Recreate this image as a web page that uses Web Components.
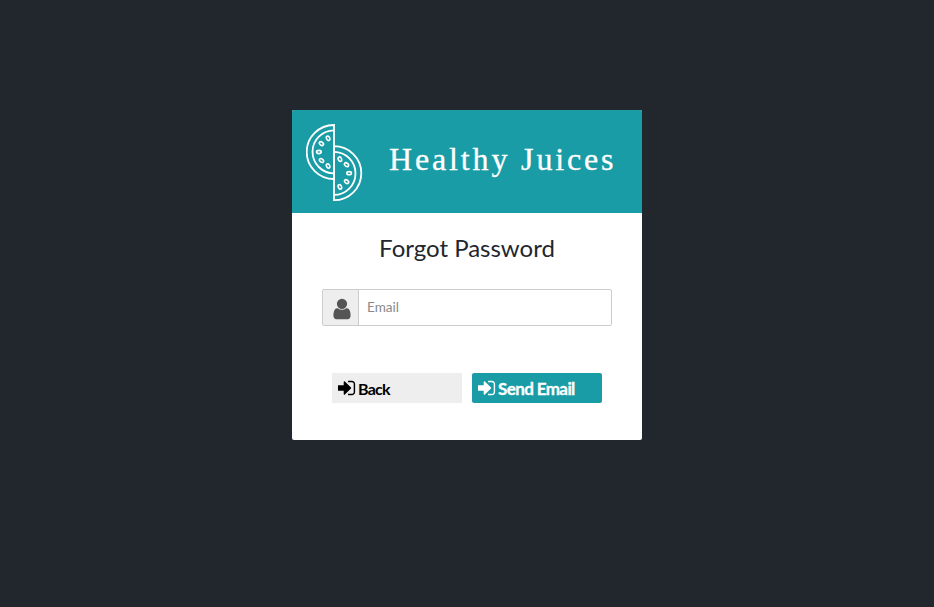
<!DOCTYPE html>
<html lang="en">
<head>
<meta charset="utf-8">
<title>Healthy Juices</title>
<style>
html,body{margin:0;height:100%;background:#22272e}
body{font-family:Lato,"Liberation Sans",sans-serif;color:#22272e}
</style>
</head>
<body>
<forgot-page></forgot-page>
<script>
const define=(name,html)=>customElements.define(name,class extends HTMLElement{
  constructor(){super();this.attachShadow({mode:'open'}).innerHTML=html;}
});

define('melon-logo',`<style>:host{display:block;width:58px;height:78px}svg{display:block}</style>
<svg width="58" height="78" viewBox="0.5 0 58 78" fill="none" stroke="#fff" stroke-width="1.8">
<defs><g id="half"><path d="M28.5 1A27.3 27 0 0 0 28.5 55Z"/><path d="M28.5 6.3A21.3 21.3 0 0 0 28.5 49.3"/>
<g stroke-width="1.6"><ellipse cx="22.6" cy="14.3" rx="1.6" ry="2.3" transform="rotate(-25 22.6 14.3)"/>
<ellipse cx="15.9" cy="19.6" rx="1.6" ry="2.3" transform="rotate(-50 15.9 19.6)"/>
<ellipse cx="13.4" cy="28" rx="1.6" ry="2.3" transform="rotate(90 13.4 28)"/>
<ellipse cx="16" cy="36.5" rx="1.6" ry="2.3" transform="rotate(-50 16 36.5)"/>
<ellipse cx="22.6" cy="42" rx="1.6" ry="2.3" transform="rotate(-25 22.6 42)"/></g></g></defs>
<use href="#half"/><use href="#half" transform="rotate(180 28.5 38.6)"/></svg>`);

define('brand-header',`<style>
:host{display:flex;box-sizing:border-box;height:103px;padding:14px 14px 11px;gap:25px;background:#199ca6;border-radius:2px 2px 0 0;color:#fff}
span{font:32px/37px "Liberation Serif",serif;letter-spacing:2.85px;white-space:nowrap;margin-top:17px;-webkit-text-stroke:.3px #fff}
</style><melon-logo></melon-logo><span><slot></slot></span>`);

define('icon-field',`<style>
:host{display:flex;box-sizing:border-box;height:37px;border:1px solid #ccc;border-radius:2px;background:#fff;overflow:hidden}
div{width:36px;box-sizing:border-box;border-right:1px solid #ccc;background:#eee;display:flex;padding:7px 0 0 6.5px}
svg{flex:none}
span{font-size:13.6px;line-height:35px;color:#8a8a8a;padding-left:8px}
</style><div><svg width="24" height="24" viewBox="0 0 1792 1792" fill="#555"><path d="M1536 1399q0 109-62.5 187t-150.5 78h-854q-88 0-150.5-78t-62.5-187q0-85 8.5-160.5t31.5-152 58.5-131 94-89 134.5-34.5q131 128 313 128t313-128q76 0 134.5 34.5t94 89 58.5 131 31.5 152 8.5 160.5zm-256-887q0 159-112.5 271.5t-271.5 112.5-271.5-112.5-112.5-271.5 112.5-271.5 271.5-112.5 271.5 112.5 112.5 271.5z"/></svg></div><span><slot></slot></span>`);

define('action-button',`<style>
:host{display:flex;box-sizing:border-box;width:130px;height:30px;background:#eee;color:#000;padding-left:5px;gap:1px}
:host([primary]){background:#199ca6;color:#fff;border-radius:2px}
svg{flex:none;margin-top:5px}
span{font-size:16px;font-weight:700;line-height:31px;letter-spacing:-.75px;white-space:nowrap}
:host([primary]) span{font-size:17px;line-height:32px;letter-spacing:-.6px;-webkit-text-stroke:.3px #fff}
</style><svg width="20" height="20" viewBox="40 0 1792 1792" fill="currentColor"><path d="M1312 896q0 26-19 45l-544 544q-19 19-45 19t-45-19-19-45v-288h-448q-26 0-45-19t-19-45v-384q0-26 19-45t45-19h448v-288q0-26 19-45t45-19 45 19l544 544q19 19 19 45zm352-352v704q0 119-84.5 203.5t-203.5 84.5h-320q-13 0-22.5-9.5t-9.5-22.5q0-4-1-20t-.5-26.5 3-23.5 10-19.5 20.5-6.5h320q66 0 113-47t47-113v-704q0-66-47-113t-113-47h-312l-11.5-1-11.5-3-8-5.5-7-9-2-13.5q0-4-1-20t-.5-26.5 3-23.5 10-19.5 20.5-6.5h320q119 0 203.5 84.5t84.5 203.5z"/></svg><span><slot></slot></span>`);

define('forgot-page',`<style>
:host{display:flex;justify-content:center;align-items:flex-start;padding-top:110px}
main{width:350px;height:330px;background:#fff;border-radius:2px}
h1{margin:19px 0 0;font-size:24px;font-weight:400;line-height:32px;text-align:center}
icon-field{margin:25px 30px 0}
nav{display:flex;justify-content:center;gap:10px;margin-top:47px}
</style><main><brand-header>Healthy Juices</brand-header><h1>Forgot Password</h1><icon-field>Email</icon-field>
<nav><action-button>Back</action-button><action-button primary>Send Email</action-button></nav></main>`);
</script>
</body>
</html>
